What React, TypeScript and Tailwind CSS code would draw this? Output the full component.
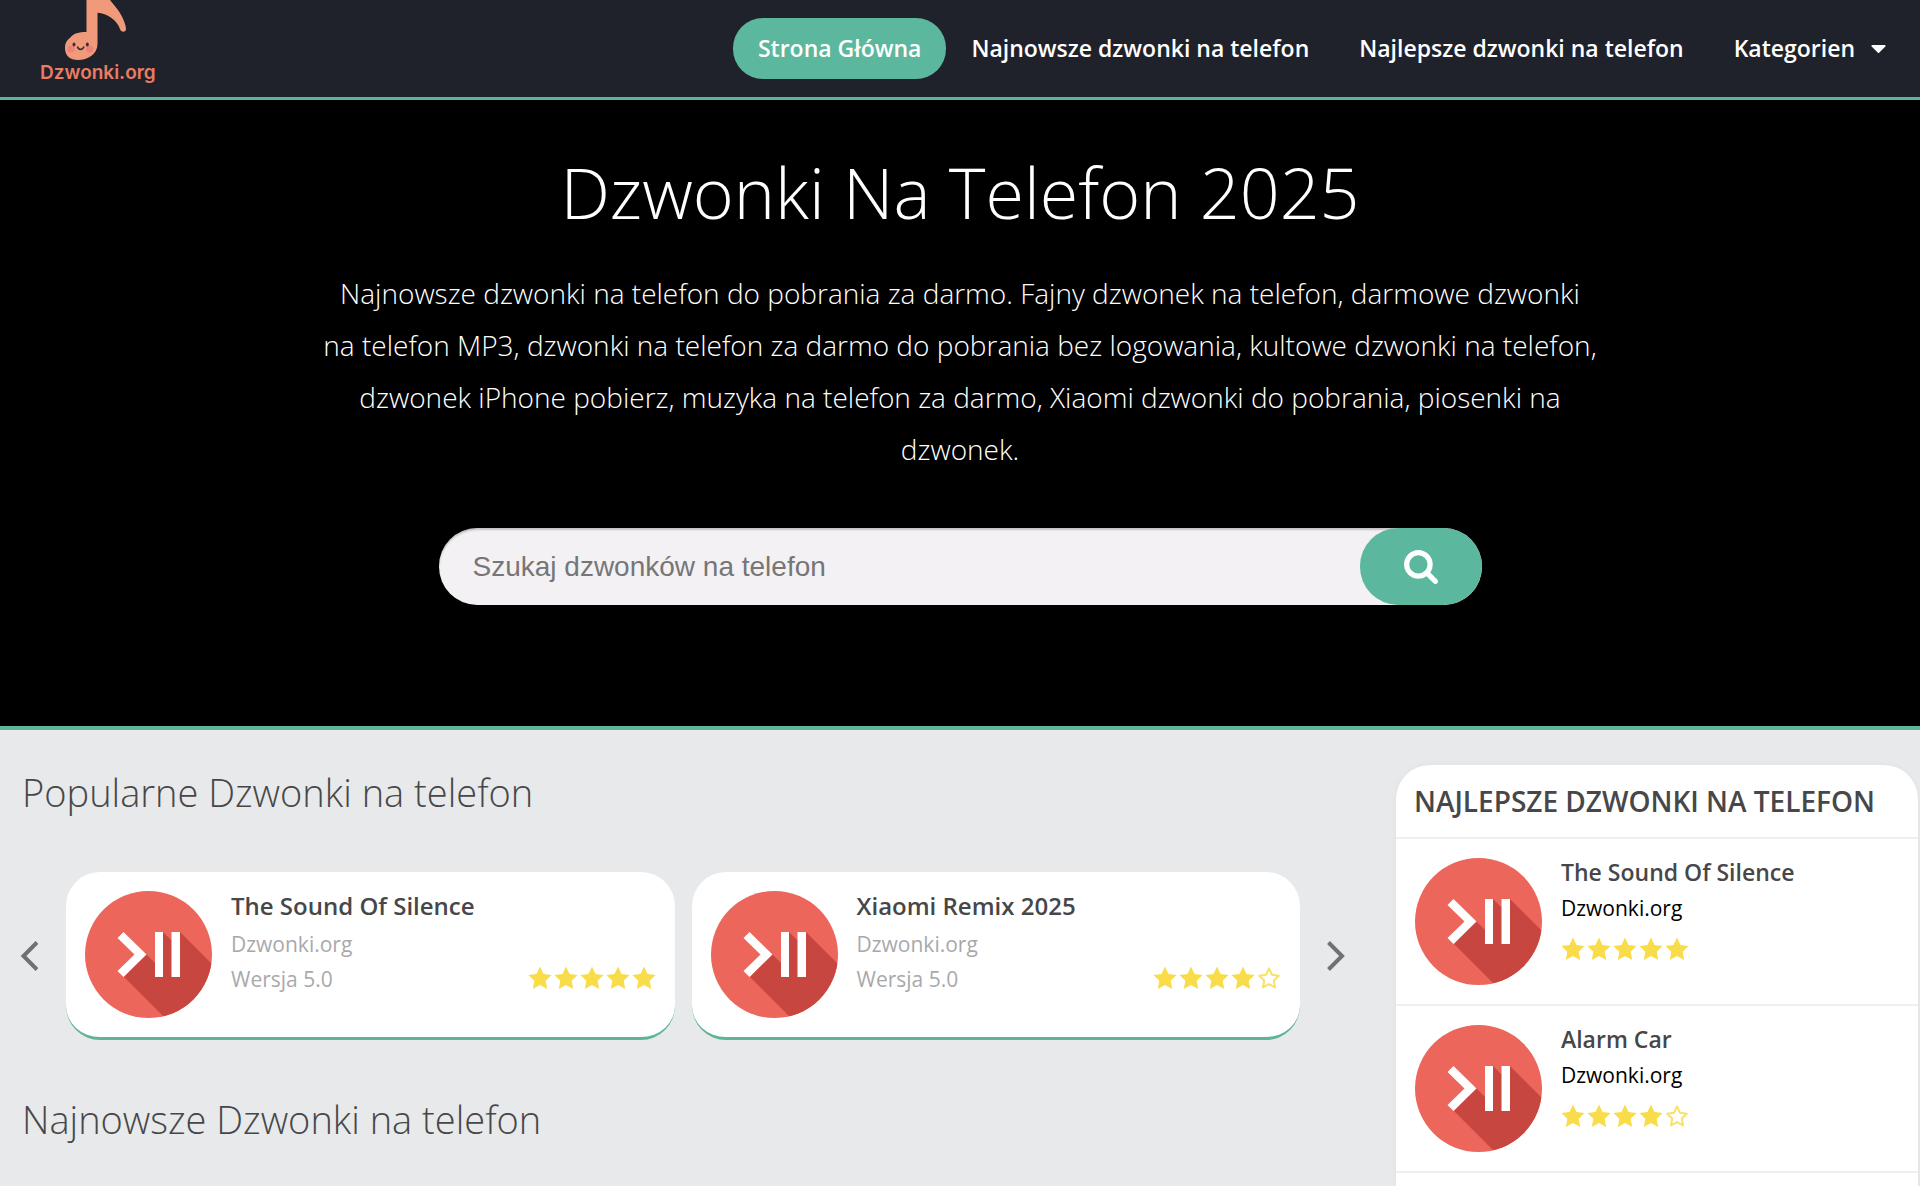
import React from "react";

type Ringtone = { title: string; rating: number };

const popular: Ringtone[] = [
  { title: "The Sound Of Silence", rating: 5 },
  { title: "Xiaomi Remix 2025", rating: 4 },
];

const best: Ringtone[] = [
  { title: "The Sound Of Silence", rating: 5 },
  { title: "Alarm Car", rating: 4 },
];

function Logo() {
  return (
    <a href="#" className="flex flex-col items-start pl-10 leading-none">
      <svg viewBox="60 0 70 61" className="ml-5 h-[61px] w-[70px]" aria-hidden="true">
        <path
          d="M86.500 0H110C113 4 117 8 120 13C123 18 126 25 126 29C126 32.500 121 32.500 120 29C117 20 107 13 97.500 12.700V44C97.500 54 88 60 78 60C70 60 65 56 65 48C65 43 67 40 70 38C73 33.500 79 32 86.500 32Z"
          fill="#f09a7b"
        />
        <circle cx="71" cy="49" r="3.500" fill="#f0807a" />
        <circle cx="89.500" cy="49" r="3.500" fill="#f0807a" />
        <ellipse cx="74" cy="44.500" rx="1.500" ry="2" fill="#3a3036" />
        <ellipse cx="87.300" cy="44.500" rx="1.500" ry="2" fill="#3a3036" />
        <path d="M77.700 47C78.500 50.200 82.500 50.200 83.700 47" fill="none" stroke="#3a3036" strokeWidth="1.600" strokeLinecap="round" />
      </svg>
      <span className="font-['Inter'] text-[19px] leading-6 font-semibold text-[#ea7c63]">Dzwonki.org</span>
    </a>
  );
}

function AppIcon() {
  const clip = React.useId();
  return (
    <svg viewBox="0 0 127 127" className="size-[127px] shrink-0" aria-hidden="true">
      <clipPath id={clip}>
        <circle cx="63.500" cy="63.500" r="63.500" />
      </clipPath>
      <g clipPath={`url(#${clip})`}>
        <rect width="127" height="127" fill="#ec665b" />
        <path d="M39 86L61 63L70 72L78 41L86 49L95 41L140 86V140H93Z" fill="#c84640" />
      </g>
      <path d="M38.500 41L61.500 63.500L38.500 86L32.500 80L49.500 63.500L32.500 47Z" fill="#fff" />
      <path d="M70 41H78V86H70ZM86.500 41H95V86H86.500Z" fill="#fff" />
    </svg>
  );
}

function Stars({ rating }: { rating: number }) {
  return (
    <div className="flex gap-0.5" role="img" aria-label={`${rating} / 5`}>
      {[1, 2, 3, 4, 5].map((n) => (
        <svg key={n} viewBox="0 0 22 22" className="size-6" aria-hidden="true">
          <path
            d={
              n <= rating
                ? "M11 .500L14.200 7.300L21.600 8.300L16.200 13.500L17.600 21L11 17.400L4.400 21L5.800 13.500L.400 8.300L7.800 7.300Z"
                : "M11 2.200L13.700 8L20 8.900L15.400 13.300L16.500 19.600L11 16.600L5.500 19.600L6.600 13.300L2 8.900L8.300 8Z"
            }
            fill={n <= rating ? "#f8dc4a" : "none"}
            stroke={n <= rating ? "none" : "#f9e26a"}
            strokeWidth="1.900"
            strokeLinejoin="round"
          />
        </svg>
      ))}
    </div>
  );
}

function Chevron({ d }: { d: string }) {
  return (
    <svg viewBox="0 0 18 30" className="h-[30px] w-[18px]" fill="none" stroke="#707173" strokeWidth="4" aria-hidden="true">
      <path d={d} />
    </svg>
  );
}

function NavLink({ children, active }: { children: React.ReactNode; active?: boolean }) {
  return (
    <a
      href="#"
      className={
        "flex h-[61px] items-center rounded-[30px] px-[25px] text-[23px] font-semibold whitespace-nowrap text-white " +
        (active ? "bg-[#5bb79d]" : "")
      }
    >
      {children}
    </a>
  );
}

export default function App() {
  return (
    <div className="flex min-h-screen flex-col bg-[#e8e9eb] font-['Open_Sans','Noto_Sans',sans-serif] text-[#474749]">
      <header className="flex items-start justify-between border-b-[3px] border-[#5fb39b] bg-[#20222b]">
        <Logo />
        <nav className="flex py-[18px] pr-[9px]">
          <NavLink active>Strona Główna</NavLink>
          <NavLink>Najnowsze dzwonki na telefon</NavLink>
          <NavLink>Najlepsze dzwonki na telefon</NavLink>
          <NavLink>
            Kategorien
            <svg viewBox="384 640 1024 576" className="ml-4 h-2 w-[15px]" fill="currentColor" aria-hidden="true">
              <path d="M1408 704q0 26-19 45l-448 448q-19 19-45 19t-45-19L403 749q-19-19-19-45t19-45 45-19h896q26 0 45 19t19 45z" />
            </svg>
          </NavLink>
        </nav>
      </header>

      <section className="flex flex-col items-center border-b-4 border-[#5fb39b] bg-black px-5 pt-11 pb-[121px] text-center text-white">
        <h1 className="text-[70px] leading-[96px] font-light">Dzwonki Na Telefon 2025</h1>
        <p className="mt-[27px] max-w-[1276px] text-[28px] leading-[52px] font-light">
          Najnowsze dzwonki na telefon do pobrania za darmo. Fajny dzwonek na telefon, darmowe dzwonki na telefon
          MP3, dzwonki na telefon za darmo do pobrania bez logowania, kultowe dzwonki na telefon, dzwonek iPhone
          pobierz, muzyka na telefon za darmo, Xiaomi dzwonki do pobrania, piosenki na dzwonek.
        </p>
        <form
          className="mt-[53px] flex h-[77px] w-full max-w-[1043px] overflow-hidden rounded-[38px] bg-[#f3f1f4] shadow-[inset_0_2px_2px_rgba(0,0,0,0.2)]"
          onSubmit={(e) => e.preventDefault()}
        >
          <input
            type="text"
            aria-label="Szukaj dzwonków na telefon"
            placeholder="Szukaj dzwonków na telefon"
            className="min-w-0 flex-1 bg-transparent pl-[34px] font-['Liberation_Sans'] text-[28px] outline-none placeholder:text-[#767676]"
          />
          <button
            type="submit"
            aria-label="Szukaj"
            className="flex w-[122px] items-center justify-center rounded-[38px] bg-[#5bb79d] text-white"
          >
            <svg viewBox="0 128 1664 1664" className="size-[34px]" fill="currentColor" aria-hidden="true">
              <path d="M1152 832q0-185-131.500-316.500T704 384 387.500 515.500 256 832t131.500 316.500T704 1280t316.500-131.500T1152 832zm512 832q0 52-38 90t-90 38q-54 0-90-38l-343-342q-179 124-399 124-143 0-273.500-55.500t-225-150-150-225T0 832t55.500-273.500 150-225 225-150T704 128t273.500 55.500 225 150 150 225T1408 832q0 220-124 399l343 343q37 37 37 90z" />
            </svg>
          </button>
        </form>
      </section>

      <div className="flex flex-1 pr-0.5">
        <main className="min-w-0 flex-1 pr-12 pl-5">
          <h2 className="mt-[35px] pl-0.5 text-[38px] leading-[54px] font-light">Popularne Dzwonki na telefon</h2>
          <div className="mt-[53px] flex items-center">
            <button type="button" aria-label="Poprzednie" className="flex w-[46px] shrink-0 justify-start">
              <Chevron d="M17 1.500L3.500 15L17 28.500" />
            </button>
            <ul className="grid min-w-0 flex-1 grid-cols-2 gap-[17px]">
              {popular.map((r) => (
                <li
                  key={r.title}
                  className="flex gap-[19px] rounded-[34px] border-b-[3px] border-[#5fb39b] bg-white p-[19px]"
                >
                  <AppIcon />
                  <div className="min-w-0 flex-1">
                    <h3 className="text-2xl leading-[29px] font-semibold">
                      <a href="#">{r.title}</a>
                    </h3>
                    <p className="mt-[7px] text-[21px] leading-[35px] text-[#a9a9ab]">Dzwonki.org</p>
                    <div className="flex items-start justify-between">
                      <p className="text-[21px] leading-[35px] text-[#a9a9ab]">Wersja 5.0</p>
                      <div className="pt-1">
                        <Stars rating={r.rating} />
                      </div>
                    </div>
                  </div>
                </li>
              ))}
            </ul>
            <button type="button" aria-label="Następne" className="flex w-12 shrink-0 justify-end pr-[3px]">
              <Chevron d="M1.500 1.500L15 15L1.500 28.500" />
            </button>
          </div>
          <h2 className="mt-[52px] pl-0.5 text-[38px] leading-[54px] font-light">Najnowsze Dzwonki na telefon</h2>
        </main>

        <aside className="mt-[35px] w-[522px] shrink-0 rounded-t-[34px] bg-white shadow-[0_0_6px_rgba(0,0,0,0.04)]">
          <h2 className="border-b-2 border-[#eeeff1] px-[18px] py-[17px] text-[28px] leading-[38px] font-semibold uppercase">
            Najlepsze dzwonki na telefon
          </h2>
          <ul>
            {best.map((r) => (
              <li key={r.title} className="flex gap-[19px] border-b-2 border-[#eeeff1] p-[19px]">
                <AppIcon />
                <div>
                  <h3 className="text-[23px] leading-[29px] font-semibold">
                    <a href="#">{r.title}</a>
                  </h3>
                  <p className="mt-1 mb-[11px] text-[21px] leading-[35px] text-black">Dzwonki.org</p>
                  <Stars rating={r.rating} />
                </div>
              </li>
            ))}
          </ul>
        </aside>
      </div>
    </div>
  );
}
